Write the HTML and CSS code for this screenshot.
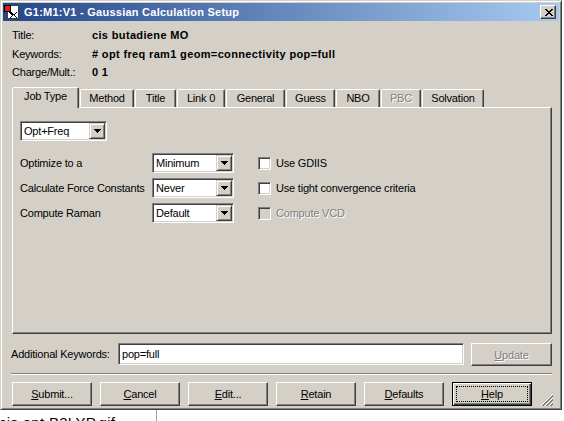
FILE: index.html
```html
<!DOCTYPE html>
<html>
<head>
<meta charset="utf-8">
<title>Gaussian Calculation Setup</title>
<link rel="stylesheet" href="styles.css">
</head>
<body>
<div class="window">
  <div class="titlebar">
    <svg class="appicon" width="16" height="16" viewBox="0 0 16 16" shape-rendering="crispEdges">
      <rect x="3.5" y="1.5" width="11" height="13" fill="#fff" stroke="#404040"/>
      <rect x="0.5" y="1.5" width="6" height="6" fill="#e81818" stroke="#000"/>
      <path d="M7 8h1v1h1v1h1v1h-1v1h-1v1h-1v1h-1v-1h1v-1h1v-1h-1v-1h-1v-1h-1v-1h1z" fill="#000"/>
      <path d="M10 10h1v-1h1v-1h1v1h-1v1h-1v1h-1z" fill="#000"/>
      <path d="M10 11h1v1h1v1h1v1h-1v-1h-1v-1h-1z" fill="#000"/>
    </svg>
    <span class="title-text">G1:M1:V1 - Gaussian Calculation Setup</span>
    <div class="close-btn">
      <svg width="8" height="7" viewBox="0 0 8 7" shape-rendering="crispEdges"><path d="M0 0h2v1h-2z M6 0h2v1h-2z M1 1h2v1h-2z M5 1h2v1h-2z M2 2h4v1h-4z M3 3h2v1h-2z M2 4h4v1h-4z M1 5h2v1h-2z M5 5h2v1h-2z M0 6h2v1h-2z M6 6h2v1h-2z" fill="#000"/></svg>
    </div>
  </div>

  <div class="content">
    <div class="info">
      <div class="info-row r1"><span class="info-label">Title:</span><span class="info-value">cis butadiene MO</span></div>
      <div class="info-row r2"><span class="info-label">Keywords:</span><span class="info-value"># opt freq ram1 geom=connectivity pop=full</span></div>
      <div class="info-row r3"><span class="info-label">Charge/Mult.:</span><span class="info-value">0 1</span></div>
    </div>

    <div class="tabs">
      <div class="tab active">Job Type</div>
      <div class="tab">Method</div>
      <div class="tab">Title</div>
      <div class="tab">Link 0</div>
      <div class="tab">General</div>
      <div class="tab">Guess</div>
      <div class="tab">NBO</div>
      <div class="tab disabled">PBC</div>
      <div class="tab">Solvation</div>
    </div>

    <div class="panel">
      <div class="combo combo-job">
        <span class="combo-text">Opt+Freq</span>
        <span class="combo-btn"><svg width="7" height="4" viewBox="0 0 7 4" shape-rendering="crispEdges"><path d="M0 0h7v1h-1v1h-1v1h-1v1h-1v-1h-1v-1h-1v-1h-1z" fill="#000"/></svg></span>
      </div>

      <div class="opt-rows">
        <div class="opt-row">
          <span class="opt-label">Optimize to a</span>
          <div class="combo combo-opt">
            <span class="combo-text">Minimum</span>
            <span class="combo-btn"><svg width="7" height="4" viewBox="0 0 7 4" shape-rendering="crispEdges"><path d="M0 0h7v1h-1v1h-1v1h-1v1h-1v-1h-1v-1h-1v-1h-1z" fill="#000"/></svg></span>
          </div>
          <span class="checkbox"></span>
          <span class="check-label">Use GDIIS</span>
        </div>
        <div class="opt-row">
          <span class="opt-label">Calculate Force Constants</span>
          <div class="combo combo-opt">
            <span class="combo-text">Never</span>
            <span class="combo-btn"><svg width="7" height="4" viewBox="0 0 7 4" shape-rendering="crispEdges"><path d="M0 0h7v1h-1v1h-1v1h-1v1h-1v-1h-1v-1h-1v-1h-1z" fill="#000"/></svg></span>
          </div>
          <span class="checkbox"></span>
          <span class="check-label">Use tight convergence criteria</span>
        </div>
        <div class="opt-row">
          <span class="opt-label">Compute Raman</span>
          <div class="combo combo-opt">
            <span class="combo-text">Default</span>
            <span class="combo-btn"><svg width="7" height="4" viewBox="0 0 7 4" shape-rendering="crispEdges"><path d="M0 0h7v1h-1v1h-1v1h-1v1h-1v-1h-1v-1h-1v-1h-1z" fill="#000"/></svg></span>
          </div>
          <span class="checkbox disabled"></span>
          <span class="check-label disabled-text">Compute VCD</span>
        </div>
      </div>
    </div>

    <div class="kw-row">
      <span class="kw-label">Additional Keywords:</span>
      <div class="textbox">pop=full</div>
      <div class="btn btn-update disabled-text"><u>U</u>pdate</div>
    </div>

    <div class="separator"></div>

    <div class="buttons">
      <div class="btn"><u>S</u>ubmit...</div>
      <div class="btn"><u>C</u>ancel</div>
      <div class="btn"><u>E</u>dit...</div>
      <div class="btn"><u>R</u>etain</div>
      <div class="btn"><u>D</u>efaults</div>
      <div class="btn btn-default"><span class="focus"><u>H</u>elp</span></div>
    </div>

    <svg class="grip" width="12" height="12" viewBox="0 0 12 12" shape-rendering="crispEdges">
      <path d="M11 0h1v1h-1z M10 1h1v1h-1z M9 2h1v1h-1z M8 3h1v1h-1z M7 4h1v1h-1z M6 5h1v1h-1z M5 6h1v1h-1z M4 7h1v1h-1z M3 8h1v1h-1z M2 9h1v1h-1z M1 10h1v1h-1z M0 11h1v1h-1z
               M11 4h1v1h-1z M10 5h1v1h-1z M9 6h1v1h-1z M8 7h1v1h-1z M7 8h1v1h-1z M6 9h1v1h-1z M5 10h1v1h-1z M4 11h1v1h-1z
               M11 8h1v1h-1z M10 9h1v1h-1z M9 10h1v1h-1z M8 11h1v1h-1z" fill="#fff"/>
      <path d="M11 1h1v2h-1z M10 2h1v2h-1z M9 3h1v2h-1z M8 4h1v2h-1z M7 5h1v2h-1z M6 6h1v2h-1z M5 7h1v2h-1z M4 8h1v2h-1z M3 9h1v2h-1z M2 10h1v2h-1z M1 11h1v1h-1z
               M11 5h1v2h-1z M10 6h1v2h-1z M9 7h1v2h-1z M8 8h1v2h-1z M7 9h1v2h-1z M6 10h1v2h-1z M5 11h1v1h-1z
               M11 9h1v2h-1z M10 10h1v2h-1z M9 11h1v1h-1z" fill="#808080"/>
    </svg>
  </div>
</div>
<div class="below">
  <div class="below-file">cis opt B3LYP.gjf</div>
</div>
</body>
</html>
```
FILE: styles.css
```css
* { box-sizing: border-box; }
html, body { margin: 0; padding: 0; }
body {
  width: 564px;
  height: 421px;
  overflow: hidden;
  background: #ffffff;
  font-family: "Liberation Sans", Arial, sans-serif;
  font-size: 11px;
  letter-spacing: -0.2px;
  color: #000;
}

.window {
  width: 562px;
  height: 410px;
  background: #d4d0c8;
  border: 1px solid;
  border-color: #d4d0c8 #404040 #404040 #d4d0c8;
  box-shadow: inset 1px 1px #ffffff, inset -1px -1px #808080;
  padding: 2px;
  display: flex;
  flex-direction: column;
}

/* Title bar */
.titlebar {
  height: 18px;
  flex: none;
  display: flex;
  align-items: center;
  padding: 0 3px 0 1px;
  background: linear-gradient(to right, #24468a, #a6caf0);
}
.appicon { flex: none; display: block; }
.title-text {
  flex: 1;
  margin-left: 4px;
  color: #fff;
  font-weight: bold;
  letter-spacing: 0.25px;
  white-space: nowrap;
}
.close-btn {
  width: 16px;
  height: 14px;
  flex: none;
  background: #d4d0c8;
  border: 1px solid;
  border-color: #ffffff #404040 #404040 #ffffff;
  box-shadow: inset -1px -1px #808080;
  display: flex;
  align-items: center;
  justify-content: center;
  padding-left: 1px;
}
.close-btn svg { display: block; }

/* Content */
.content {
  flex: 1;
  position: relative;
  padding-top: 5px;
  display: flex;
  flex-direction: column;
}

.info { margin-left: 9px; }
.info-row { display: flex; align-items: center; }
.info-row.r1 { height: 18px; }
.info-row.r2 { height: 19px; }
.info-row.r3 { height: 18px; }
.info-label { width: 80px; flex: none; }
.info-value { font-weight: bold; letter-spacing: 0.35px; white-space: nowrap; }

/* Tabs */
.tabs {
  display: flex;
  align-items: flex-end;
  height: 20px;
  margin: 6px 0 0 9px;
}
.tab {
  height: 18px;
  margin-right: 1px;
  border: 1px solid;
  border-bottom: none;
  border-color: #ffffff #404040 transparent #ffffff;
  border-radius: 2px 2px 0 0;
  box-shadow: inset -1px 0 #808080;
  text-align: center;
  line-height: 16px;
  white-space: nowrap;
  background: #d4d0c8;
}
.tab.active {
  height: 21px;
  margin-bottom: -1px;
  position: relative;
  z-index: 1;
  line-height: 17px;
}
.tab.disabled { color: #808080; text-shadow: 1px 1px #fff; }
.tab:nth-child(1) { width: 67px; }
.tab:nth-child(2) { width: 54px; }
.tab:nth-child(3) { width: 41px; }
.tab:nth-child(4) { width: 48px; }
.tab:nth-child(5) { width: 59px; }
.tab:nth-child(6) { width: 49px; }
.tab:nth-child(7) { width: 44px; }
.tab:nth-child(8) { width: 40px; }
.tab:nth-child(9) { width: 62px; }

/* Panel */
.panel {
  width: 540px;
  height: 227px;
  flex: none;
  margin-left: 9px;
  border: 1px solid;
  border-color: #ffffff #404040 #404040 #ffffff;
  box-shadow: inset -1px -1px #808080;
  padding: 13px 0 0 7px;
}

.combo {
  display: flex;
  height: 20px;
  background: #fff;
  border: 1px solid;
  border-color: #808080 #ffffff #ffffff #808080;
  box-shadow: inset 1px 1px #404040, inset -1px -1px #d4d0c8;
  padding: 1px;
}
.combo-job { width: 87px; }
.combo-opt { width: 82px; flex: none; }
.combo-text {
  flex: 1;
  padding-left: 2px;
  line-height: 16px;
  white-space: nowrap;
}
.combo-btn {
  width: 16px;
  height: 16px;
  flex: none;
  background: #d4d0c8;
  border: 1px solid;
  border-color: #d4d0c8 #404040 #404040 #d4d0c8;
  box-shadow: inset 1px 1px #ffffff, inset -1px -1px #808080;
  display: flex;
  align-items: center;
  justify-content: center;
}
.combo-btn svg { display: block; }

.opt-rows {
  margin-top: 12px;
  display: flex;
  flex-direction: column;
  gap: 5px;
}
.opt-row {
  display: flex;
  align-items: center;
  height: 20px;
}
.opt-label { width: 132px; flex: none; white-space: nowrap; }
.checkbox {
  width: 13px;
  height: 13px;
  flex: none;
  margin-left: 24px;
  background: #fff;
  border: 1px solid;
  border-color: #808080 #ffffff #ffffff #808080;
  box-shadow: inset 1px 1px #404040, inset -1px -1px #d4d0c8;
}
.checkbox.disabled { background: #d4d0c8; }
.check-label { margin-left: 5px; white-space: nowrap; }
.disabled-text { color: #808080; text-shadow: 1px 1px #ffffff; }

/* Additional keywords */
.kw-row {
  display: flex;
  align-items: flex-start;
  height: 23px;
  margin: 9px 0 0 8px;
}
.kw-label {
  width: 107px;
  flex: none;
  line-height: 23px;
  white-space: nowrap;
}
.textbox {
  width: 346px;
  height: 22px;
  background: #fff;
  border: 1px solid;
  border-color: #808080 #ffffff #ffffff #808080;
  box-shadow: inset 1px 1px #404040, inset -1px -1px #d4d0c8;
  padding: 0 3px;
  line-height: 20px;
}

.btn {
  width: 80px;
  height: 24px;
  flex: none;
  background: #d4d0c8;
  border: 1px solid;
  border-color: #ffffff #404040 #404040 #ffffff;
  box-shadow: inset -1px -1px #808080;
  display: flex;
  align-items: center;
  justify-content: center;
  white-space: nowrap;
}
.btn-update {
  width: 81px;
  height: 23px;
  margin-left: 7px;
}

.separator {
  height: 2px;
  margin: 7px 7px 0 8px;
  border-top: 1px solid #808080;
  border-bottom: 1px solid #ffffff;
}

.buttons {
  display: flex;
  gap: 8px;
  margin: 7px 0 0 9px;
}
.btn-default {
  border: 1px solid #000;
  box-shadow: inset 1px 1px #ffffff, inset -1px -1px #404040, inset -2px -2px #808080;
  padding: 3px;
}
.focus {
  flex: 1;
  align-self: stretch;
  display: flex;
  align-items: center;
  justify-content: center;
  border: 1px dotted #000;
}

.grip {
  position: absolute;
  right: 6px;
  bottom: 1px;
  display: block;
}

/* Area below the dialog (partially visible file list) */
.below {
  height: 11px;
  overflow: hidden;
  display: flex;
}
.below-file {
  width: 158px;
  height: 11px;
  border-right: 1px solid #a0a0a0;
  font-size: 15px;
  letter-spacing: 0.3px;
  line-height: 15px;
  padding-top: 5px;
  margin-left: -1px;
  white-space: nowrap;
  overflow: hidden;
}
```
